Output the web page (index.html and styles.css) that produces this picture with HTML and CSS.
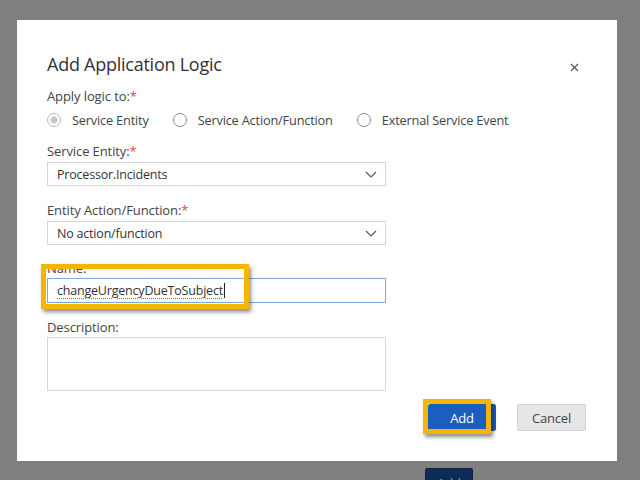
FILE: index.html
```html
<!DOCTYPE html>
<html>
<head>
<meta charset="utf-8">
<link rel="stylesheet" href="styles.css">
</head>
<body>
<div class="dialog">
  <div class="header">
    <h1 class="title">Add Application Logic</h1>
    <span class="close">
      <svg width="9" height="9" viewBox="0 0 9 9"><path d="M1 1L8 8M8 1L1 8" stroke="#555" stroke-width="1.2"/></svg>
    </span>
  </div>
  <div class="label first">Apply logic to:<span class="req">*</span></div>
  <div class="radios">
    <label class="radio"><span class="circle checked"></span>Service Entity</label>
    <label class="radio"><span class="circle"></span>Service Action/Function</label>
    <label class="radio"><span class="circle"></span>External Service Event</label>
  </div>
  <div class="label l2">Service Entity:<span class="req">*</span></div>
  <div class="select">Processor.Incidents<svg class="chev" width="12" height="7" viewBox="0 0 12 7"><path d="M1 1L6 6L11 1" fill="none" stroke="#555" stroke-width="1.1"/></svg></div>
  <div class="label l3">Entity Action/Function:<span class="req">*</span></div>
  <div class="select">No action/function<svg class="chev" width="12" height="7" viewBox="0 0 12 7"><path d="M1 1L6 6L11 1" fill="none" stroke="#555" stroke-width="1.1"/></svg></div>
  <div class="label l4">Name:</div>
  <div class="input"><span class="typed">changeUrgencyDueToSubject</span><span class="caret"></span></div>
  <div class="label l5">Description:</div>
  <div class="textarea"></div>
  <div class="footer">
    <button class="btn primary">Add</button>
    <button class="btn secondary">Cancel</button>
  </div>
  <div class="hl hl-name"></div>
  <div class="hl hl-add"></div>
</div>
<div class="under"><button class="btn-under">Add</button></div>
</body>
</html>
```
FILE: styles.css
```css
html, body {
  margin: 0;
  padding: 0;
}
body {
  background: #7f7f7f;
  width: 640px;
  height: 480px;
  overflow: hidden;
  font-family: "Open Sans", "Noto Sans", sans-serif;
  color: #333;
}
.dialog {
  position: relative;
  box-sizing: border-box;
  margin: 20px 0 0 17px;
  width: 600px;
  height: 441px;
  background: #fff;
  padding: 0 31px 0 30px;
  display: flex;
  flex-direction: column;
  align-items: flex-start;
}
.header {
  display: flex;
  justify-content: space-between;
  align-items: center;
  width: 100%;
  margin-top: 30px;
  height: 28px;
}
.title {
  margin: 0;
  font-size: 18px;
  font-weight: 400;
  color: #333;
  letter-spacing: -0.25px;
}
.close {
  display: flex;
  margin-right: 7px;
  margin-top: 6px;
}
.label {
  font-size: 13px;
  line-height: 16px;
  color: #444;
  letter-spacing: -0.1px;
}
.req { color: #e34444; }
.first { margin-top: 10px; }
.radios {
  display: flex;
  margin-top: 8px;
  height: 16px;
  align-items: center;
}
.radio {
  display: flex;
  align-items: center;
  font-size: 12.8px;
  color: #444;
  letter-spacing: -0.2px;
  margin-right: 24px;
}
.circle {
  box-sizing: border-box;
  width: 14px;
  height: 14px;
  border: 1px solid #8a8a8a;
  border-radius: 50%;
  margin-right: 11px;
  background: #fff;
}
.circle.checked {
  border-color: #b5b5b5;
  background: radial-gradient(circle, #c8c8c8 0 3.2px, #fff 3.8px);
}
.l2 { margin-top: 15px; }
.select, .input {
  box-sizing: border-box;
  width: 339px;
  height: 24px;
  border: 1px solid #d6d6d6;
  margin-top: 3px;
  display: flex;
  align-items: center;
  justify-content: space-between;
  padding: 0 8px 0 9px;
  font-size: 12.5px;
  color: #333;
  letter-spacing: -0.2px;
}
.l3 { margin-top: 16px; }
.l4 { margin-top: 15px; }
.input {
  border-color: #7ea9d8;
  height: 25px;
  margin-top: 2px;
  justify-content: flex-start;
}
.typed {
  text-decoration: underline dotted #e05050;
  text-underline-offset: 3px;
}
.caret {
  display: inline-block;
  width: 1px;
  height: 15px;
  background: #222;
  margin-left: 1px;
}
.l5 { margin-top: 16px; }
.textarea {
  box-sizing: border-box;
  width: 339px;
  height: 54px;
  border: 1px solid #d6d6d6;
  margin-top: 2px;
}
.footer {
  display: flex;
  gap: 21px;
  align-self: flex-end;
  margin-top: 13px;
}
.btn {
  font-family: "Open Sans", "Noto Sans", sans-serif;
  font-size: 13px;
  height: 27px;
  border-radius: 2px;
  letter-spacing: -0.2px;
}
.primary {
  width: 68px;
  background: #1a5fbd;
  border: 1px solid #1a5fbd;
  color: #fff;
}
.secondary {
  width: 69px;
  background: #e6e6e6;
  border: 1px solid #d2d2d2;
  color: #444;
}
.hl {
  position: absolute;
  box-sizing: border-box;
  border: 5px solid #f7b500;
  box-shadow: 2px 3px 4px rgba(0,0,0,0.45);
}
.hl-name {
  left: 24px;
  top: 244px;
  width: 208px;
  height: 45px;
}
.hl-add {
  left: 406px;
  top: 379px;
  width: 68px;
  height: 35px;
}
.under {
  padding: 7px 0 0 425px;
}
.btn-under {
  width: 48px;
  height: 30px;
  background: #0e2b55;
  border: 1px solid #0a2248;
  border-radius: 2px;
  color: #8d9bb0;
  font-family: "Open Sans", sans-serif;
  font-size: 13px;
  padding: 0;
  vertical-align: top;
}
```
